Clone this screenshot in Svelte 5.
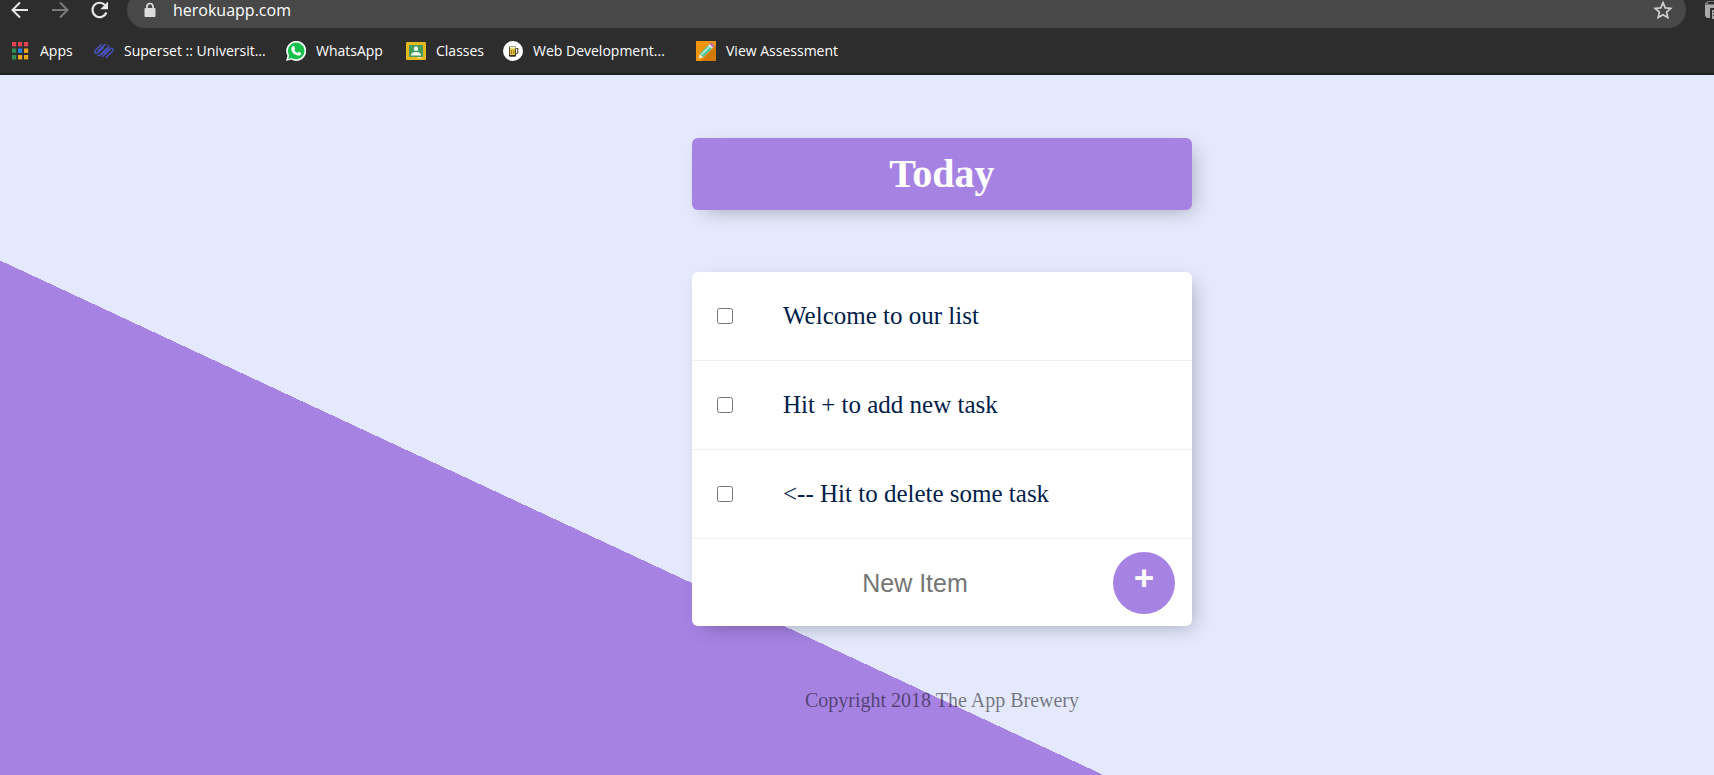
<script>
  let tasks = $state([
    { text: 'Welcome to our list', done: false },
    { text: 'Hit + to add new task', done: false },
    { text: '<-- Hit to delete some task', done: false }
  ]);
  let draft = $state('');

  const appColors = ['#e0434f', '#e0434f', '#e0434f', '#2f8f55', '#2383ea', '#eba51d', '#2f8f55', '#eba51d', '#eba51d'];

  function addTask(event) {
    event.preventDefault();
    if (draft.trim()) {
      tasks.push({ text: draft.trim(), done: false });
      draft = '';
    }
  }
</script>

<div class="window">
  <header class="browser">
    <div class="toolbar">
      <div class="controls">
        <button class="icon-button" aria-label="Back">
          <svg viewBox="0 0 20 20"><path d="M18 10H3M10 2.5L2.5 10l7.5 7.5" fill="none" stroke="#e8e8e8" stroke-width="2" /></svg>
        </button>
        <button class="icon-button" aria-label="Forward">
          <svg viewBox="0 0 20 20"><path d="M2 10h15M10 2.5l7.500 7.500-7.500 7.500" fill="none" stroke="#7b7b7b" stroke-width="2" /></svg>
        </button>
        <button class="icon-button" aria-label="Reload">
          <svg viewBox="0 0 20 20">
            <path d="M16.400 12.500A7.200 7.200 0 1 1 15 5.100" fill="none" stroke="#e8e8e8" stroke-width="2.200" />
            <path d="M18 1.500v7.700h-7.700z" fill="#e8e8e8" />
          </svg>
        </button>
      </div>
      <div class="address">
        <svg class="lock" viewBox="0 0 14 16">
          <rect x="1.500" y="6" width="11" height="9" rx="1" fill="#dcdcdc" />
          <path d="M4 6.500V4.500a3 3 0 0 1 6 0v2" fill="none" stroke="#dcdcdc" stroke-width="1.700" />
        </svg>
        <input class="url" aria-label="Address" value="herokuapp.com" readonly />
        <button class="icon-button" aria-label="Bookmark this page">
          <svg viewBox="0 0 20 20"><path d="M10 2.700l2.200 5.200 5.600.5-4.200 3.700 1.200 5.500-4.800-2.900-4.800 2.900 1.200-5.500-4.200-3.700 5.600-.5z" fill="none" stroke="#cfcfcf" stroke-width="1.700" /></svg>
        </button>
      </div>
      <button class="extension" aria-label="Extension">
        <svg viewBox="0 0 20 20">
          <path d="M0 5V3l3-2h17v4z" fill="#777" />
          <path d="M3 3h17" stroke="#2d2d2d" stroke-width="2" />
          <path d="M0 5h20v13H2l-2-2z" fill="#a9a9a9" />
          <rect x="5" y="8" width="15" height="12" rx="1" fill="#2d2d2d" />
          <rect x="7" y="10" width="13" height="9" fill="#a9a9a9" />
          <path d="M8 12.500h8M8 15.500h8" stroke="#2d2d2d" />
        </svg>
      </button>
    </div>
    <nav class="bookmarks" aria-label="Bookmarks">
      <a href="#apps">
        <svg viewBox="0 0 20 20">
          {#each appColors as color, i}
            <rect x={2 + (i % 3) * 6} y={1 + Math.floor(i / 3) * 6.500} width="4.200" height="4.400" fill={color} />
          {/each}
        </svg>
        <span>Apps</span>
      </a>
      <a href="#superset">
        <svg viewBox="0 0 20 20" fill="none" stroke="#4a55c4" stroke-width="1.300" stroke-linecap="round">
          <path d="M7.500 3.500L1.800 8.800Q0 10.800 1.200 12Q2.500 13 4.500 11.200L9.500 6.500" />
          <path d="M3.500 14.500Q5 15 6.500 13.500L12.500 7.500" />
          <path d="M11.500 3.800Q10.500 3.500 9.500 4.800L4 10" />
          <path d="M7.500 13.500L13.500 7.800Q15.500 5.500 14 4.500" />
          <path d="M16 8.500L10.500 13.800Q9 15.500 8 15.200" />
          <path d="M10.500 13L15.500 8.300Q17.500 6.500 18.600 7.500Q19.800 8.700 18 10.700L12.300 16.200" />
        </svg>
        <span>Superset :: Universit...</span>
      </a>
      <a href="#whatsapp">
        <svg viewBox="0 0 20 20">
          <path d="M0 20l1.500-5.200A10 10 0 1 1 5.300 18.600z" fill="#f5fff8" />
          <path d="M2.200 17.900l1-3.500a8.300 8.300 0 1 1 2.500 2.500z" fill="#18bf4b" />
          <path d="M6.500 5.300l1.500-.3 1.200 2.800-.9 1.300c.7 1.300 1.700 2.200 3.100 2.800l1.200-1.200 2.600 1.300c0 1.700-1.200 2.700-2.800 2.600-3.900-.5-6.700-3.200-7.100-6.600 0-1.100.4-2 1.200-2.700z" fill="#fff" />
        </svg>
        <span>WhatsApp</span>
      </a>
      <a href="#classes">
        <svg viewBox="0 0 20 20">
          <rect y="1" width="20" height="18" rx="1" fill="#e5b91e" />
          <rect x="3" y="4" width="14" height="12" fill="#459c5b" />
          <circle cx="10" cy="7.800" r="2.200" fill="#f4faf3" />
          <path d="M5 14.500q0-3.500 5-3.500t5 3.500z" fill="#f4faf3" />
          <path d="M11 16h5v1.500h-5z" fill="#f5dc78" />
        </svg>
        <span>Classes</span>
      </a>
      <a href="#web-development">
        <svg viewBox="0 0 20 20">
          <circle cx="10" cy="10" r="10" fill="#fff" />
          <path d="M12.500 7.500h2.200v4.500l-2.200 1.200" fill="none" stroke="#555038" stroke-width="1.200" />
          <rect x="6.500" y="5.500" width="6" height="9.500" rx=".8" fill="#e4c33c" stroke="#544b2b" />
          <path d="M7 6.500h5.500" stroke="#f5efd4" stroke-width="2" />
          <path d="M8.500 9v4M10.800 9v4" stroke="#a77d17" />
          <path d="M6 14.800h7" stroke="#29251d" stroke-width="1.400" />
        </svg>
        <span>Web Development...</span>
      </a>
      <a href="#assessment">
        <svg viewBox="0 0 20 20">
          <rect width="20" height="20" fill="#ef940d" />
          <path d="M20 4v16H5z" fill="#d27908" />
          <path d="M2.500 17.500l1.300-4.800 3.500 3.500z" fill="#f7e8c4" />
          <path d="M3.800 12.700L13 3.500l3.500 3.500-9.200 9.200z" fill="#51c7a3" />
          <path d="M5.500 13.500l9-9" stroke="#c8f4df" stroke-width="1.200" />
          <path d="M12.300 4.200l1.200-1.200L17 6.500l-1.200 1.200z" fill="#e7eee8" />
          <path d="M13.500 3l1-1q1-.7 2 .3l1.200 1.200q1 1 .3 2l-1 1z" fill="#bd6fb2" />
        </svg>
        <span>View Assessment</span>
      </a>
    </nav>
  </header>

  <main class="page">
    <div class="box heading">
      <h1>Today</h1>
    </div>

    <div class="box list">
      {#each tasks as task, i}
        <div class="item">
          <input type="checkbox" id="task-{i}" bind:checked={task.done} />
          <label for="task-{i}" class:done={task.done}>{task.text}</label>
        </div>
      {/each}
      <form class="new-item" onsubmit={addTask}>
        <input type="text" placeholder="New Item" aria-label="New Item" autocomplete="off" bind:value={draft} />
        <button type="submit" aria-label="Add item">+</button>
      </form>
    </div>

    <footer>Copyright 2018 The App Brewery</footer>
  </main>
</div>

<style>
  :global(body) {
    margin: 0;
  }

  .window {
    display: flex;
    flex-direction: column;
    min-height: 100vh;
  }

  button {
    padding: 0;
    border: 0;
    background: none;
    cursor: pointer;
  }

  svg {
    display: block;
    flex: none;
    width: 20px;
    height: 20px;
  }

  .browser {
    overflow: hidden;
    background: #2d2d2d;
    border-bottom: 2px solid #202020;
    font-family: "Open Sans", "Noto Sans", sans-serif;
    color: #fff;
  }

  .toolbar {
    display: flex;
    align-items: center;
    height: 36px;
    margin-top: -8px;
  }

  .controls {
    display: flex;
    gap: 20px;
    padding: 0 17px 0 10px;
  }

  .address {
    flex: 1;
    display: flex;
    align-items: center;
    box-sizing: border-box;
    height: 36px;
    padding: 0 13px 0 16px;
    border-radius: 18px;
    background: #484848;
  }

  .lock {
    width: 14px;
    height: 16px;
  }

  .url {
    flex: 1;
    min-width: 0;
    margin: 0 16px;
    padding: 0;
    border: 0;
    outline: 0;
    background: none;
    color: inherit;
    font: 16px/24px "Open Sans", "Noto Sans", sans-serif;
  }

  .extension {
    width: 9px;
    margin-left: 19px;
    overflow: hidden;
  }

  .bookmarks {
    display: grid;
    grid-template-columns: 84px 192px 120px 97px 193px max-content;
    align-items: center;
    height: 45px;
    padding-left: 10px;
  }

  .bookmarks a {
    display: flex;
    align-items: center;
    gap: 10px;
    color: inherit;
    font-size: 14px;
    line-height: 20px;
    text-decoration: none;
    white-space: nowrap;
  }

  .page {
    flex: 1;
    padding: 63px 0 63px 170px;
    background: #e4e9fd linear-gradient(25deg, #a683e3 50%, #e4e9fd 50%) 0 0 / 110% 1250px no-repeat;
    font-family: "Liberation Serif", "Times New Roman", serif;
  }

  .box {
    width: 500px;
    margin: 0 auto 62px;
    border-radius: 6px;
    overflow: hidden;
    background: #fff;
    box-shadow: 6px 6px 19px -6px rgba(0, 0, 0, 0.3);
  }

  .heading {
    background: #a683e3;
  }

  h1 {
    margin: 0;
    padding: 12px;
    color: #fff;
    font-size: 40px;
    line-height: 48px;
    text-align: center;
  }

  .item {
    display: flex;
    align-items: center;
    min-height: 88px;
    border-bottom: 1px solid #f1f1f1;
  }

  .item input {
    width: 16px;
    height: 16px;
    margin: 0 50px 0 25px;
  }

  .item label {
    color: #00204a;
    font-size: 25px;
    line-height: 30px;
  }

  .done {
    text-decoration: line-through;
  }

  .new-item {
    display: flex;
    align-items: center;
    min-height: 87px;
    padding: 0 17px 0 25px;
  }

  .new-item input {
    flex: 1;
    min-width: 0;
    padding: 0;
    border: 0;
    outline: 0;
    background: transparent;
    font: 25px/30px "Liberation Sans", Arial, sans-serif;
    text-align: center;
  }

  .new-item input::placeholder {
    color: #757575;
  }

  .new-item button {
    box-sizing: border-box;
    width: 62px;
    height: 62px;
    padding-bottom: 10px;
    border-radius: 50%;
    background: #a683e3;
    color: #fff;
    font: 700 36px/40px "Open Sans", sans-serif;
  }

  footer {
    color: rgba(0, 0, 0, 0.5);
    font-size: 20px;
    line-height: 24px;
    text-align: center;
  }
</style>
